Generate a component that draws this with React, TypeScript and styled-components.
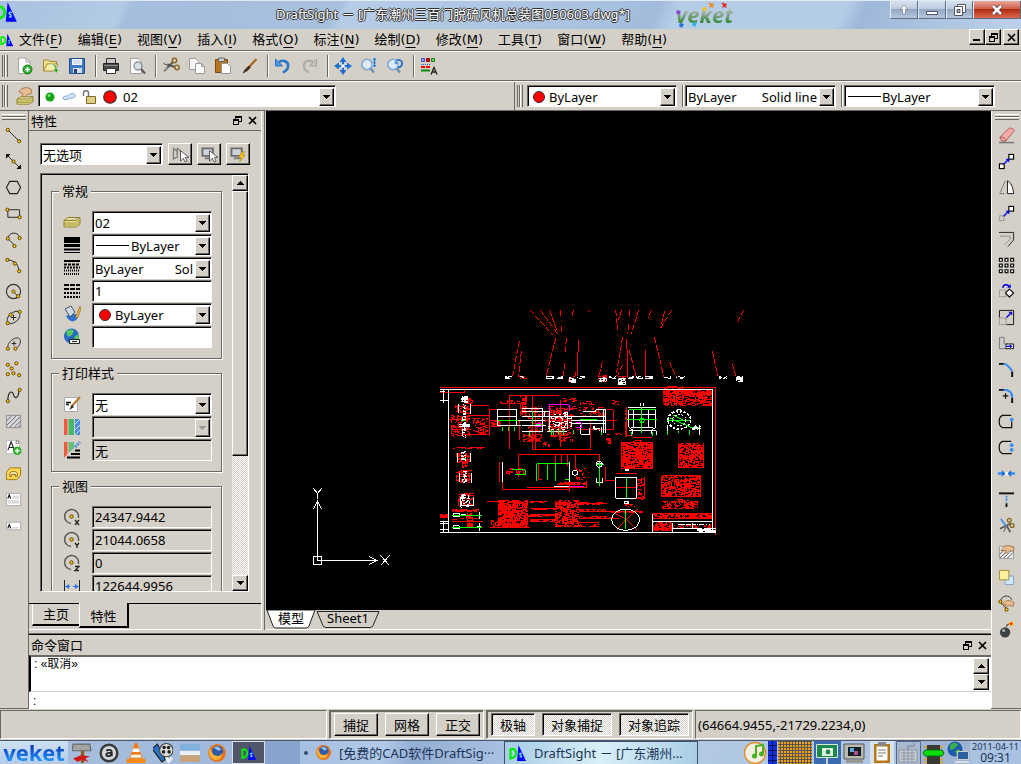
import React from "react";
import styled, { createGlobalStyle, css } from "styled-components";

const face = "#d4d0c8";
const shade = "#6a6862";
const uiFont = '"Noto Sans", "Noto Sans CJK SC", sans-serif';
const dither = `repeating-conic-gradient(#fff 0 25%, ${face} 0 50%) 0 0 / 2px 2px`;

const GlobalStyle = createGlobalStyle`
  * { box-sizing: border-box; }
  body { margin: 0; background: ${face}; overflow: hidden; }
  button, input, select, textarea { font: inherit; color: inherit; margin: 0; border-radius: 0; outline: none; }
`;

const raised = css`
  background: ${face};
  border: 1px solid;
  border-color: #fff #000 #000 #fff;
  box-shadow: inset -1px -1px 0 ${shade};
`;
const sunken = css`
  border: 1px solid;
  border-color: ${shade} #fff #fff ${shade};
  box-shadow: inset 1px 1px 0 #000;
`;

const Page = styled.div`
  display: flex;
  flex-direction: column;
  height: 100vh;
  min-height: 600px;
  font: 13px/18px ${uiFont};
  color: #000;
  background: ${face};
`;

/* ---------- title bar ---------- */
const TitleBar = styled.header`
  display: flex;
  align-items: flex-start;
  height: 29px;
  flex: none;
  border-top: 1px solid #dfeaf5;
  background: linear-gradient(115deg, #a9c1df 0%, #b4cbe6 12%, #a6bedd 13%, #a8c0de 33%, #b6cce7 34%, #a9c2e0 58%, #a3bbdb 64%, #b6cde8 66%, #b5cce7 82%, #9fb8d9 84%, #bcd1ea 100%);
`;
const TitleLogo = styled.span`
  display: flex;
  width: 276px;
  svg { margin-left: -4px; }
`;
const Title = styled.h1`
  margin: 0;
  padding-top: 3px;
  flex: 1;
  white-space: nowrap;
  font: 13px/20px ${uiFont};
  color: #fff;
  text-shadow: 1px 0 0 #333, -1px 0 0 #333, 0 1px 0 #333, 0 -1px 0 #333;
`;
const Brand = styled.span`
  position: relative;
  width: 60px;
  margin-right: 154px;
  font: italic bold 22px/26px "Open Sans", sans-serif;
  svg { position: absolute; left: 0; top: 0; }
`;
const BrandText = styled.span`
  background: linear-gradient(#cfd9cf 20%, #8fa58f 50%, #2f8a2c 80%);
  background-clip: text;
  color: transparent;
`;
const WindowButtons = styled.div`
  display: flex;
  height: 18px;
`;
const WindowButton = styled.button<{ $w: number; $close?: boolean }>`
  display: grid;
  place-items: center;
  width: ${(p) => p.$w}px;
  height: 18px;
  padding: 0;
  border: 1px solid #5b6b83;
  border-top: 0;
  border-left-color: #e4edf7;
  background: ${(p) =>
    p.$close
      ? "linear-gradient(#e9a99a, #d0604a 45%, #b32c12 50%, #d9694f)"
      : "linear-gradient(#d7e2ef, #bccbde 45%, #93a7c2 50%, #b6c8de)"};
`;

/* ---------- menu ---------- */
const MenuBar = styled.nav`
  display: flex;
  align-items: center;
  height: 22px;
  flex: none;
  padding-right: 2px;
  border-bottom: 1px solid ${shade};
  font-family: "DejaVu Sans", "Noto Sans CJK SC", sans-serif;
`;
const MenuItems = styled.div`
  display: flex;
  flex: 1;
  gap: 15px;
  padding-left: 5px;
`;
const MenuItem = styled.button`
  padding: 0;
  border: 0;
  background: none;
  white-space: nowrap;
  u { text-underline-offset: 3px; }
`;
const MdiButton = styled.button<{ $gap?: boolean }>`
  ${raised}
  display: grid;
  place-items: center;
  align-self: flex-start;
  width: 16px;
  height: 16px;
  padding: 0;
  margin-left: ${(p) => (p.$gap ? 2 : 0)}px;
`;

/* ---------- toolbars ---------- */
const ToolRow = styled.div`
  display: flex;
  align-items: center;
  height: 30px;
  flex: none;
  border-top: 1px solid #fff;
  border-bottom: 1px solid ${shade};
`;
const ToolSection = styled.div<{ $grow?: boolean }>`
  display: flex;
  align-items: center;
  height: 100%;
  flex: ${(p) => (p.$grow ? "1" : "none")};
  border-right: ${(p) => (p.$grow ? `1px solid ${shade}` : "0")};
  padding-right: ${(p) => (p.$grow ? 0 : 26)}px;
`;
const Grip = styled.span`
  width: 6px;
  height: 22px;
  margin: 0 4px 0 2px;
  border: solid;
  border-width: 0 1px;
  border-color: #fff ${shade};
  background: linear-gradient(90deg, ${face} 1px, ${shade} 1px 2px, #fff 2px 3px, ${face} 3px);
`;
const GripFlat = styled.span`
  flex: none;
  width: 24px;
  height: 6px;
  margin: 3px 0 2px 2px;
  border: solid;
  border-width: 1px 0;
  border-color: #fff ${shade} ${shade};
  background: linear-gradient(${face} 1px, ${shade} 1px 2px, #fff 2px 3px, ${face} 3px);
`;
const ToolButton = styled.button`
  display: grid;
  place-items: center;
  flex: none;
  width: 26px;
  height: 26px;
  padding: 0;
  border: 0;
  background: none;
`;
const Separator = styled.span`
  width: 2px;
  height: 22px;
  margin: 0 1px 0 5px;
  background: linear-gradient(90deg, ${shade} 1px, #fff 1px);
`;
const Combo = styled.label<{ $w?: number; $off?: boolean }>`
  ${sunken}
  display: flex;
  align-items: center;
  flex: ${(p) => (p.$w ? "none" : "1")};
  width: ${(p) => (p.$w ? `${p.$w}px` : "auto")};
  min-width: 0;
  height: 22px;
  padding: 2px 1px 1px 2px;
  background: ${(p) => (p.$off ? face : "#fff")};
  select {
    flex: 1;
    min-width: 0;
    height: 18px;
    padding: 0;
    border: 0;
    appearance: none;
    background: none;
    line-height: 18px;
  }
  > svg { flex: none; }
`;
const ComboNote = styled.span`
  flex: none;
  white-space: nowrap;
  margin-right: 2px;
`;
const Drop = styled.span`
  ${raised}
  display: grid;
  place-items: center;
  flex: none;
  width: 15px;
  height: 18px;
`;
const Field = styled.input<{ $off?: boolean }>`
  ${sunken}
  flex: 1;
  min-width: 0;
  height: 22px;
  padding: 0 2px;
  background: ${(p) => (p.$off ? face : "#fff")};
`;

/* ---------- work area ---------- */
const Work = styled.main`
  display: flex;
  flex: 1;
  min-height: 0;
`;
const SideBar = styled.div<{ $left?: boolean }>`
  display: flex;
  flex-direction: column;
  flex: none;
  width: ${(p) => (p.$left ? 29 : 30)}px;
  padding-left: ${(p) => (p.$left ? 0 : 2)}px;
  overflow: hidden;
  border: 0 solid ${shade};
  border-right-width: ${(p) => (p.$left ? 1 : 0)}px;
  border-bottom-width: 1px;
  box-shadow: ${(p) => (p.$left ? "none" : "inset 1px 0 0 #fff")};
`;
const Middle = styled.div`
  display: flex;
  flex-direction: column;
  flex: 1;
  min-width: 0;
`;
const Upper = styled.div`
  display: flex;
  flex: 1;
  min-height: 0;
`;
const Properties = styled.section`
  display: flex;
  flex-direction: column;
  flex: none;
  width: 233px;
  border-right: 1px solid #fff;
  border-bottom: 1px solid #fff;
`;
const PanelTitle = styled.div`
  display: flex;
  align-items: center;
  flex: none;
  height: 20px;
  padding: 0 1px 0 2px;
  h2 { flex: 1; margin: 0; font: inherit; }
`;
const PropTitle = styled(PanelTitle)`
  border-bottom: 1px solid ${shade};
`;
const PanelButton = styled.button`
  display: grid;
  place-items: center;
  width: 15px;
  height: 15px;
  padding: 0;
  border: 0;
  background: none;
`;
const PickRow = styled.div`
  display: flex;
  gap: 5px;
  padding: 12px 11px 8px 11px;
`;
const PickButton = styled.button`
  ${raised}
  display: grid;
  place-items: center;
  width: 24px;
  height: 22px;
  padding: 0;
`;
const PropFrame = styled.div`
  ${sunken}
  display: flex;
  flex: 1;
  min-height: 0;
  margin: 0 12px 11px 11px;
  padding: 1px 0 0 2px;
`;
const PropList = styled.div`
  flex: 1;
  min-width: 0;
  overflow: hidden;
  padding: 7px 10px 0 8px;
`;
const Group = styled.fieldset`
  min-width: 0;
  margin: 0 0 5px;
  padding: 11px 9px 9px 11px;
  border: 1px solid ${shade};
  box-shadow: inset 1px 1px 0 #fff, 1px 1px 0 #fff;
  legend {
    height: 18px;
    margin-left: -4px;
    padding: 0 3px;
    background: ${face};
  }
`;
const PropRow = styled.div`
  display: flex;
  align-items: center;
  margin-bottom: 1px;
  > svg { flex: none; margin-right: 11px; }
`;
const ScrollBar = styled.div`
  display: flex;
  flex-direction: column;
  flex: none;
  width: 16px;
  background: ${dither};
`;
const ScrollButton = styled.button`
  ${raised}
  display: grid;
  place-items: center;
  flex: none;
  width: 16px;
  height: 16px;
  padding: 0;
`;
const ScrollThumb = styled.div`
  ${raised}
  height: 69%;
`;
const ScrollSpace = styled.div`
  flex: 1;
`;
const PanelTabs = styled.div`
  display: flex;
  flex: none;
  height: 26px;
  padding-left: 3px;
  border-top: 1px solid #000;
`;
const PanelTab = styled.button<{ $on?: boolean }>`
  width: ${(p) => (p.$on ? 50 : 47)}px;
  height: ${(p) => (p.$on ? 25 : 22)}px;
  padding: ${(p) => (p.$on ? 2 : 0)}px 0 0;
  margin-top: ${(p) => (p.$on ? -1 : 0)}px;
  background: ${face};
  border: 1px solid;
  border-width: 0 ${(p) => (p.$on ? 2 : 0)}px 2px 1px;
  border-color: #fff #000 #000 #fff;
`;
const Viewport = styled.section`
  display: flex;
  flex-direction: column;
  flex: 1;
  min-width: 0;
  padding-left: 1px;
  margin-left: 2px;
  border-left: 1px solid ${shade};
`;
const Canvas = styled.div`
  flex: 1;
  min-height: 0;
  background: #000;
  svg { display: block; width: 100%; height: 100%; }
`;
const SheetTabs = styled.div`
  display: flex;
  flex: none;
  height: 20px;
  border-bottom: 1px solid #fff;
`;
const SheetTab = styled.button<{ $on?: boolean }>`
  display: grid;
  width: ${(p) => (p.$on ? 50 : 64)}px;
  height: 19px;
  padding: 0;
  border: 0;
  background: none;
  line-height: 17px;
  > * { grid-area: 1 / 1; }
`;
const Command = styled.section`
  flex: none;
  margin-top: 4px;
  border-top: 1px solid #000;
  box-shadow: 0 -1px 0 ${shade};
`;
const Log = styled.div`
  display: flex;
  height: 37px;
  padding: 1px 2px 1px 0;
  border: solid;
  border-width: 2px 0 1px 2px;
  border-color: ${shade} #fff ${face} #000;
  background: #fff;
  textarea {
    flex: 1;
    padding: 0 3px;
    border: 0;
    resize: none;
    overflow: hidden;
    background: none;
    font: 12px/12px "Liberation Sans", "Noto Sans CJK SC", sans-serif;
  }
`;
const LogScroll = styled.div`
  display: flex;
  flex-direction: column;
`;
const Prompt = styled.input`
  display: block;
  width: 100%;
  height: 17px;
  padding: 0 4px;
  border: 0;
  background: #fff;
  font: 12px/16px "Liberation Sans", "Noto Sans CJK SC", sans-serif;
`;

/* ---------- status bar ---------- */
const StatusBar = styled.footer`
  display: flex;
  flex: none;
  gap: 2px;
  height: 31px;
  padding-top: 1px;
`;
const StatusBox = styled.div<{ $w?: number }>`
  display: flex;
  align-items: center;
  gap: 7px;
  flex: ${(p) => (p.$w ? "none" : "1")};
  width: ${(p) => (p.$w ? `${p.$w}px` : "auto")};
  height: 29px;
  padding: 0 2px;
  border: 1px solid;
  border-color: ${shade} #fff #fff ${shade};
`;
const ModeBox = styled(StatusBox)`
  flex: none;
  padding: 0 3px 0 4px;
  box-shadow: inset 1px 1px 0 ${shade};
`;
const ModeButton = styled.button<{ $down?: boolean }>`
  ${(p) => (p.$down ? sunken : raised)}
  height: 23px;
  padding: 0 8px;
  background: ${(p) => (p.$down ? dither : face)};
`;

/* ---------- task bar ---------- */
const TaskBar = styled.footer`
  display: flex;
  align-items: stretch;
  flex: none;
  height: 24px;
  overflow: hidden;
  border-top: 1px solid #4a5870;
  background: linear-gradient(100deg, #a9c0de, #97b1d6 45%, #b5cbe6 60%, #a9c2e1);
  color: #1c3557;
`;
const StartButton = styled.button`
  width: 68px;
  padding: 0;
  border: 0;
  background: linear-gradient(#cfe0f3, #b3cbe8);
  font: bold 22px/23px "Open Sans", sans-serif;
  span {
    display: block;
    background: linear-gradient(#0a3fc0 25%, #1a8cf5 80%);
    background-clip: text;
    color: transparent;
  }
`;
const Launch = styled.button`
  display: grid;
  place-items: center;
  width: 27px;
  padding: 0;
  border: 0;
  background: none;
`;
const PagerOn = styled.span`
  display: grid;
  place-items: center;
  width: 33px;
  margin-left: 2px;
  border: 1px solid #d8dde6;
  background: #4f5768;
`;
const PagerOff = styled.span`
  width: 35px;
  background: #88a4cc;
`;
const Task = styled.button<{ $on?: boolean }>`
  display: flex;
  align-items: center;
  gap: 7px;
  width: ${(p) => (p.$on ? 194 : 204)}px;
  padding: 0 4px;
  overflow: hidden;
  white-space: nowrap;
  border: 0 solid #40506a;
  border-width: ${(p) => (p.$on ? "1px 1px 0 1px" : "0")};
  background: ${(p) =>
    p.$on ? "linear-gradient(100deg, #a5cbe4, #d9eff8 50%, #a9cde4)" : "linear-gradient(100deg, #a6c0e2, #b2c9e7 40%, #94aed4 55%, #a9c2e2)"};
  color: inherit;
`;
const Spacer = styled.span`
  flex: 1;
`;
const Tray = styled.div`
  display: flex;
  align-items: stretch;
  svg { display: block; flex: none; }
`;
const Clock = styled.time`
  width: 51px;
  text-align: center;
  white-space: nowrap;
  font: 9px/11px ${uiFont};
  color: #1c3557;
  span { display: block; font-size: 12px; line-height: 12px; }
`;

/* ---------- small drawings ---------- */
const Svg = ({ s = 18, w, h, box, children }: { s?: number; w?: number; h?: number; box?: string; children: React.ReactNode }) => (
  <svg width={w || s} height={h || s} viewBox={box || "0 0 18 18"} fill="none" aria-hidden="true">
    {children}
  </svg>
);
const Arrow = ({ up, off }: { up?: boolean; off?: boolean }) => (
  <svg width="7" height="4" viewBox="0 0 7 4" shapeRendering="crispEdges" aria-hidden="true">
    <path d={up ? "M3 0h1v1h1v1h1v1h1v1H0V3h1V2h1V1h1z" : "M0 0h7v1H6v1H5v1H4v1H3V3H2V2H1V1H0z"} fill={off ? "#999" : "#000"} />
  </svg>
);
const Restore = () => (
  <svg width="9" height="9" viewBox="0 0 9 9" shapeRendering="crispEdges" aria-hidden="true">
    <path d="M2.500 3V.5h6v5H6M2 1.500h7M.5 3.500h5v5h-5zM0 4.500h6" stroke="#000" fill="none" />
  </svg>
);
const Cross = () => (
  <svg width="9" height="9" viewBox="0 0 9 9" aria-hidden="true">
    <path d="M1 1l7 7M8 1L1 8" stroke="#000" strokeWidth="1.700" />
  </svg>
);
const DsMark = ({ s = 18 }: { s?: number }) => (
  <Svg s={s}>
    <path d="M9.500 1L17 17H8z" fill="#00f" />
    <path d="M1.500 5.500v9c4-.5 6-3 5.500-6S4 4 1.500 5.500z" stroke="#0e0" strokeWidth="2.200" />
    <path d="M13 9.500c-2-1-3 .5-1.500 1.500s1.500 2.500-1 2" stroke="#7fe3ff" strokeWidth="1.200" />
  </Svg>
);
const RedDot = ({ s = 14 }: { s?: number }) => (
  <Svg s={s} box="0 0 14 14">
    <circle cx="7" cy="7" r="5.500" fill="red" stroke="#333" strokeWidth="1" />
  </Svg>
);
const Rule = () => (
  <svg width="33" height="3" shapeRendering="crispEdges" aria-hidden="true">
    <path d="M0 1.500h33" stroke="#000" />
  </svg>
);

const Dots = ({ at }: { at: number[][] }) => (
  <>
    {at.map(([x, y], i) => (
      <circle key={i} cx={x} cy={y} r="1.700" fill="#ffc800" stroke="#4a3500" strokeWidth=".9" />
    ))}
  </>
);
const Squares = ({ at }: { at: number[][] }) => (
  <>
    {at.map(([x, y], i) => (
      <rect key={i} x={x} y={y} width="5" height="5" fill="#fff" stroke="#000" strokeWidth="1.200" />
    ))}
  </>
);

const fileIcons: Record<string, React.ReactNode> = {
  new: (
    <>
      <path d="M2.500 1h7.500l4 4v11.500H2.500z" fill="#fcfcfc" stroke="#a5a5a5" />
      <path d="M10 1v4h4" stroke="#a5a5a5" />
      <circle cx="11.500" cy="12.500" r="4.500" fill="#2bb02b" stroke="#167a16" />
      <path d="M11.500 10v5M9 12.500h5" stroke="#fff" strokeWidth="1.600" />
    </>
  ),
  open: (
    <>
      <path d="M1.500 14V3h5l1 1.500h7V7" fill="#efe08e" stroke="#a28b32" />
      <path d="M1.500 14L5 7h11l-3 7z" fill="#f6eca6" stroke="#a28b32" />
      <path d="M7 8c4-1 6 1 6 4h-2l3.500 4.500L17 12h-2c0-4-3-6-8-4z" fill="#3aa53a" stroke="#e8f4dc" strokeWidth=".6" />
    </>
  ),
  save: (
    <>
      <path d="M1.500 1.500h15v15h-15z" fill="#3f7bc4" stroke="#1e4e8c" />
      <path d="M4 2h10v6H4z" fill="#f2f6fb" />
      <path d="M5 4h8M5 6h8" stroke="#b9c7d8" />
      <path d="M5 11h9v5H5z" fill="#d4dde8" />
      <path d="M6 12h3v4H6z" fill="#27456e" />
    </>
  ),
  print: (
    <>
      <path d="M4.500 1.500h9V7h-9z" fill="#c9c9c9" stroke="#333" />
      <path d="M1.500 6.500h15v7h-15z" fill="#4a4a4a" stroke="#222" />
      <path d="M2 8.500h14" stroke="#8b8b8b" />
      <path d="M4.500 11.500h9v5h-9z" fill="#fff" stroke="#333" />
    </>
  ),
  preview: (
    <>
      <path d="M2.500 1.500h8l3 3v12h-11z" fill="#fafafa" stroke="#a0a0a0" />
      <circle cx="10" cy="9" r="4" fill="#d3dbe3" fillOpacity=".9" stroke="#8c959e" strokeWidth="1.400" />
      <path d="M13 12l4 4.500" stroke="#555" strokeWidth="2" />
    </>
  ),
  cut: (
    <>
      <path d="M1.500 6l11 4M2 14l9-9" stroke="#555" strokeWidth="2" />
      <circle cx="12.500" cy="3.500" r="2.200" stroke="#8a6a1e" strokeWidth="1.500" />
      <circle cx="15" cy="10.500" r="2.200" stroke="#8a6a1e" strokeWidth="1.500" />
      <path d="M1.500 5.500l4 1.500M2 13.500l3-3" stroke="#f4f4f4" />
    </>
  ),
  copy: (
    <>
      <path d="M1.500 1.500h6l3 3v8h-9z" fill="#fbfbfb" stroke="#9a9a9a" />
      <path d="M7.500 6.500h6l3 3v7h-9z" fill="#fbfbfb" stroke="#9a9a9a" />
      <path d="M13.500 6.500v3h3" stroke="#9a9a9a" />
    </>
  ),
  paste: (
    <>
      <path d="M1.500 2.500h12v13h-12z" fill="#b8731c" stroke="#7c4b0e" />
      <path d="M4.500 1h6v3.500h-6z" fill="#ccc" stroke="#666" />
      <path d="M7.500 6.500h6l3 3v7h-9z" fill="#fbfbfb" stroke="#999" />
    </>
  ),
  brush: (
    <>
      <path d="M16.500 2L8 11" stroke="#a2601a" strokeWidth="2" />
      <path d="M9 9l1.500 1.500-3 3-4.500 2.500L5.500 12z" fill="#4b3322" stroke="#1f140c" strokeWidth=".6" />
    </>
  ),
  undo: (
    <>
      <path d="M5 5c5-3 10 0 9 5-.4 2.500-2 4-5 5.500" stroke="#2b74c8" strokeWidth="2.600" />
      <path d="M1.500 2v7h7z" fill="#4b97e6" stroke="#2b6fc0" />
    </>
  ),
  redo: (
    <>
      <path d="M13 5C8 2 3 5 4 10c.4 2.500 2 4 5 5.500" stroke="#b1aea7" strokeWidth="2.400" />
      <path d="M16.500 2v7h-7z" fill="#c6c3bc" stroke="#a5a29b" />
    </>
  ),
  pan: (
    <>
      <path d="M9 2v14M2 9h14" stroke="#1f6fd0" strokeWidth="2" />
      <path d="M9 0l3.500 5h-7zM9 18l3.500-5h-7zM0 9l5-3.500v7zM18 9l-5-3.500v7z" fill="#1f6fd0" />
      <circle cx="9" cy="9" r="1.800" fill="#fff" />
    </>
  ),
  zoom: (
    <>
      <circle cx="7" cy="7.500" r="5.200" fill="#dcebf8" stroke="#83a7cf" strokeWidth="1.600" />
      <path d="M10.500 11.500l3.500 4" stroke="#6e8fb3" strokeWidth="2.400" />
      <path d="M14.500 3v5" stroke="#1f6fd0" strokeWidth="1.600" />
      <path d="M14.500 0L17 3.500h-5zM14.500 11L17 7.500h-5z" fill="#1f6fd0" stroke="#fff" strokeWidth=".4" />
    </>
  ),
  zoomBack: (
    <>
      <circle cx="7" cy="7.500" r="5.200" fill="#dcebf8" stroke="#83a7cf" strokeWidth="1.600" />
      <path d="M10.500 11.500l3.500 4" stroke="#6e8fb3" strokeWidth="2.400" />
      <path d="M10 3.500c4-2 7 1 6 4s-3 3-4 3" stroke="#2b74c8" strokeWidth="1.800" />
      <path d="M8.500 2v5.500h5z" fill="#4b97e6" stroke="#fff" strokeWidth=".4" />
    </>
  ),
  style: (
    <>
      <path d="M1.500 1.500h3v3h-3z" fill="#8fa4ff" stroke="#3c50c8" />
      <path d="M6.500 1.500h3v3h-3z" fill="red" stroke="#800" />
      <path d="M11.500 1.500h3v3h-3z" fill="#58e058" stroke="#117a11" />
      <path d="M1 7.500h9" stroke="#3c50c8" strokeDasharray="1 1" />
      <path d="M1 10h9" stroke="red" strokeWidth="2" strokeDasharray="4 1" />
      <path d="M1 13.500h9" stroke="#0a8a0a" strokeWidth="2" />
      <path d="M11 17.500l3-7 3 7M12 15h4" stroke="#222" strokeWidth="1.300" />
    </>
  ),
};

const drawIcons: [string, React.ReactNode][] = [
  ["line", <><path d="M4 4l11 11" stroke="#222" /><Dots at={[[3, 3], [15, 15]]} /></>],
  ["infinite line", <><path d="M2 2l14 14" stroke="#222" /><path d="M1 1h5L1 6zM17 17h-5l5-5z" fill="#111" /><Dots at={[[9, 9]]} /></>],
  ["polygon", <path d="M5 2.500h8L16.500 9 13 15.500H5L1.500 9z" stroke="#222" strokeWidth="1.200" />],
  ["rectangle", <><path d="M3 5h12.500v8H3z" stroke="#222" /><Dots at={[[2.500, 5], [15.500, 13]]} /></>],
  ["arc", <><path d="M3 8c1-7 10-8 13-1M3 8l7 7" stroke="#222" /><Dots at={[[3, 8], [15.500, 7.500], [10, 16]]} /></>],
  ["curve", <><path d="M3 3c8 1 11 5 12 12" stroke="#222" /><Dots at={[[2.500, 3], [10.500, 7], [15, 15]]} /></>],
  ["circle", <><circle cx="9" cy="9" r="7.500" stroke="#333" strokeWidth="1.200" /><path d="M9 9l4.500 5" stroke="#333" /><Dots at={[[9, 9], [14, 14]]} /></>],
  ["ellipse", <><ellipse cx="9" cy="9" rx="8" ry="5" transform="rotate(-42 9 9)" stroke="#333" /><path d="M9 6v6M6 9h6" stroke="#222" /><Dots at={[[6, 6], [15.500, 3], [3, 15]]} /></>],
  ["elliptic arc", <><path d="M3 14C2 9 8 3 13 3s4 8-1 11" stroke="#333" /><path d="M9.500 6.500v5M7 9h5" stroke="#222" /><Dots at={[[3, 14.500], [11, 14.500]]} /></>],
  ["points", <Dots at={[[3, 4], [12, 2.500], [7, 8], [3, 14], [9, 13], [15, 15]]} />],
  ["spline", <><path d="M3 15C3 3 8 4 9 8s5 6 6-5" stroke="#222" strokeWidth="1.200" /><Dots at={[[3, 15], [15.500, 3]]} /></>],
  ["hatch", <><path d="M1.500 2.500h15v13h-15z" fill="#d9d9dc" stroke="#8b8b90" /><path d="M2 8l5-5M2 13L12 3M5 15L16 4M10 15l6-6M14 15l2-2" stroke="#5c5c64" /></>],
  ["note", <><path d="M1.500 1.500h14v14h-14z" fill="#fff" stroke="#bbb" /><path d="M3 12L6.500 3 10 12M4 9h5" stroke="#222" strokeWidth="1.200" /><circle cx="13" cy="3.500" r="1.500" stroke="#444" strokeWidth=".8" /><circle cx="13" cy="12.500" r="4.500" fill="#2bb02b" /><path d="M13 10v5M10.500 12.500h5" stroke="#fff" strokeWidth="1.500" /></>],
  ["region", <><path d="M5 3h11.500v8l-4 4.500H1.500V8z" fill="#ffd653" stroke="#9c7a12" /><path d="M5 12V9c1-3 7-3 8 0v3h-2v-2H7v2z" fill="#f5e6ae" stroke="#8a6a1e" /></>],
  ["text", <><path d="M1.500 2.500h15v13h-15z" fill="#fff" stroke="#aaa" /><path d="M3 8l1.500-4L6 8" stroke="#111" strokeWidth="1.200" /><path d="M8 5.500h7M8 7.500h7M3 10.500h12M3 12.500h12" stroke="#bbb" /></>],
  ["simple text", <><path d="M1.500 5.500h15v8h-15z" fill="#fff" stroke="#aaa" /><path d="M3 12l1.500-4L6 12" stroke="#111" strokeWidth="1.200" /><path d="M8 11.500h6" stroke="#bbb" /></>],
];

const blueArrow = <path d="M6 12l5-5" stroke="#0a0ae0" strokeWidth="1.500" />;
const hand = <path d="M3 8c2-4 6-6 10-5l4 2-1 4-4-1-3 3-2-1 2-2z" fill="#e7bd91" stroke="#9a6c3e" strokeWidth=".8" />;
const editIcons: [string, React.ReactNode][] = [
  ["erase", <><path d="M1 16.500h16" stroke="#777" strokeWidth="1.600" /><path d="M2 11l9-9c2-2 7 0 6 2.500L8 15H4z" fill="#f3aaa5" stroke="#a95a56" /><path d="M2 11c3-1 6 1 6 4" stroke="#a95a56" /></>],
  ["move", <><Squares at={[[1.500, 11.500], [11.500, 1.500]]} />{blueArrow}<path d="M12 6v4l-4-4z" fill="#00d" /></>],
  ["mirror", <><path d="M7.500 2L2 15.500h5.500" stroke="#222" strokeDasharray="1 1" /><path d="M10 2v13.500h6.500C16 8 13 3 10 2z" fill="#fff" stroke="#111" /></>],
  ["copy", <><Squares at={[[11.500, 1.500]]} /><path d="M1.500 11.500h5v5h-5z" stroke="#777" strokeDasharray="1.500 1" />{blueArrow}<path d="M12 6v4l-4-4z" fill="#00d" /></>],
  ["offset", <><path d="M1 1.500h15.500v8l-6 7" stroke="#222" /><path d="M2 5.500h11v3l-7 7" stroke="#777" strokeDasharray="2 1" /></>],
  ["pattern", <path d="M1.500 1.500h3v3h-3zM7.500 1.500h3v3h-3zM13.500 1.500h3v3h-3zM1.500 7.500h3v3h-3zM7.500 7.500h3v3h-3zM13.500 7.500h3v3h-3zM1.500 13.500h3v3h-3zM7.500 13.500h3v3h-3zM13.500 13.500h3v3h-3z" fill="#fff" stroke="#111" strokeWidth="1.300" />],
  ["rotate", <><path d="M1.500 7.500h7v7h-7z" stroke="#777" strokeDasharray="1.500 1" /><path d="M12 6.500l4.500 4-4.500 4.500-4-4.500z" fill="#fff" stroke="#111" strokeWidth="1.300" /><path d="M5 5c1-4 5-4 7-1" stroke="#00d" strokeWidth="1.500" /><path d="M9.500 5h4V1z" fill="#00d" /></>],
  ["scale", <><path d="M1.500 9V1.500h15v15H9" stroke="#111" /><path d="M1.500 9.500h7v7h-7z" stroke="#777" strokeDasharray="1.500 1" /><path d="M9 9l5-5" stroke="#00d" strokeWidth="1.400" /><path d="M15 3v4l-4-4z" fill="#00d" /></>],
  ["stretch", <><path d="M1.500 2.500h5v7h4v5h-9z" fill="#ccc" stroke="#777" /><path d="M8.500 9.500h8v5h-8z" fill="#fff" stroke="#111" /><path d="M9 12h4" stroke="#00d" strokeWidth="1.400" /><path d="M12.500 9.800l3 2.200-3 2.200z" fill="#00d" /></>],
  ["chamfer", <><path d="M1 3h6M15 11v6" stroke="#111" strokeWidth="2" /><path d="M6 3c3 0 7 4 9 8" stroke="#3a8df0" strokeWidth="2.200" /></>],
  ["fillet", <><path d="M1 3h6M15 11v6" stroke="#111" strokeWidth="2" /><path d="M5 9.500h6M8 6.500v6" stroke="#111" strokeWidth="1.300" /><path d="M6 3c6 0 9 3 9 8" stroke="#3a8df0" strokeWidth="2.200" /></>],
  ["break", <><path d="M14 2.500H5C0 4 0 14 5 15.500h9.500V9" stroke="#111" strokeWidth="1.300" /><circle cx="14.500" cy="7" r="2" fill="#3a8df0" /></>],
  ["split", <><path d="M14 2.500H5C0 4 0 14 5 15.500h9.500" stroke="#111" strokeWidth="1.300" /><circle cx="14.500" cy="6.500" r="2" fill="#3a8df0" /><circle cx="14.500" cy="11.500" r="2" fill="#3a8df0" /></>],
  ["weld", <><path d="M0 9h7M11 9h7" stroke="#3a8df0" strokeWidth="2.400" /><path d="M7 9h4" stroke="#fff" strokeWidth="3" /><path d="M4 5.500L8 9l-4 3.500zM14 5.500L10 9l4 3.500z" fill="#1f6fd0" /></>],
  ["trim", <><path d="M1 2.500h16" stroke="#111" strokeWidth="2" /><path d="M9 5v7" stroke="#3a8df0" strokeWidth="2" strokeDasharray="2 1" /><path d="M9 13v4" stroke="#111" strokeWidth="2" /></>],
  ["scissors", <><path d="M9 9l4 7M2 12.500l12-6" stroke="#555" strokeWidth="1.800" /><path d="M3 2l6 8" stroke="#3a8df0" strokeWidth="1.800" /><path d="M9 9l-3 7" stroke="#777" strokeWidth="1.400" /><circle cx="12" cy="3.500" r="2" stroke="#8a6a1e" strokeWidth="1.400" /><circle cx="15" cy="9" r="2" stroke="#8a6a1e" strokeWidth="1.400" /></>],
  ["edit hatch", <><path d="M1.500 3.500h15v13h-15z" fill="#eee" stroke="#999" /><path d="M2 12l5-5M2 16l9-9M6 16l9-9M10 16l6-6" stroke="#555" />{hand}</>],
  ["order", <><path d="M7.500 7.500h9v9h-9z" fill="#cfe8fb" stroke="#7fa3bd" /><path d="M1.500 1.500h10v10h-10z" fill="#fbf0a0" stroke="#9a8c3c" /></>],
  ["edit polyline", <><path d="M2.500 7c1-7 10-8 12-2M3 8l6 7" stroke="#333" /><path d="M4 10c2-3 6-5 9-4l4 2-1 4-4-1-3 2-2-1 2-2z" fill="#e7bd91" stroke="#9a6c3e" strokeWidth=".8" /><Dots at={[[2.500, 7], [9, 15.500]]} /></>],
  ["explode", <><circle cx="7.500" cy="12" r="5.500" fill="#3f4144" /><circle cx="6" cy="10" r="1.600" fill="#aeb2b6" /><path d="M9 6c0-2 2-3 4-3" stroke="#555" strokeWidth="1.500" /><circle cx="14" cy="3" r="2.600" fill="#ffb300" /><circle cx="14" cy="3" r="1.200" fill="#e00" /></>],
];

const layerStack = <path d="M1 7.500L5 4.500h12l-4 3zM1 7.500V14h12l4-3V4.500" fill="#eee58d" stroke="#8c8230" />;
const centreMark = (path: string) => (
  <>
    <path d="M15.500 10A7 7 0 1 0 8 15.500" stroke="#555" strokeWidth="1.400" />
    <Dots at={[[8.500, 8.500]]} />
    <path d={path} stroke="#222" strokeWidth="1.300" />
  </>
);
const propIcons: Record<string, React.ReactNode> = {
  layer: <>{layerStack}<path d="M1 10h12l4-3M1 12h12l4-3" stroke="#8c8230" strokeWidth=".8" /></>,
  weight: <><path d="M1 4h16" stroke="#000" strokeWidth="6" /><path d="M1 9.500h16" stroke="#000" strokeWidth="3" /><path d="M1 13.500h16" stroke="#000" strokeWidth="2" /><path d="M1 16.500h16" stroke="#000" /></>,
  pattern: <><path d="M1 2h16" stroke="#000" strokeWidth="2" /><path d="M1 5.500h16" stroke="#000" strokeDasharray="3 1" strokeWidth="2" /><path d="M1 8.500h16" stroke="#000" strokeDasharray="2 1" strokeWidth="2" /><path d="M1 11.500h16M1 15h16" stroke="#000" strokeDasharray="1 1" strokeWidth="2" /></>,
  scale: <><path d="M1 3h16M1 7h16" stroke="#000" strokeDasharray="5 1" strokeWidth="2" /><path d="M1 11h16M1 15h16" stroke="#000" strokeDasharray="2 1" strokeWidth="2" /></>,
  colour: <><path d="M3 11c3 7 10 7 12 1-1-3-4-4-7-3z" fill="#2f6fd0" /><path d="M2 4l6-3 4 6-5 5z" fill="#cdd6e2" stroke="#44546c" /><path d="M17 1l-5 12 3-1 3-8z" fill="#e8b348" stroke="#916319" strokeWidth=".6" /></>,
  link: <><circle cx="8.500" cy="8" r="7.500" fill="#2468c8" /><path d="M3 4c3-3 6-3 8-1l-2 4-4 2zM11 9l4-3 1 4-3 4z" fill="#56c860" /><path d="M6.500 11.500h10v4h-10z" fill="#eee" stroke="#222" /><path d="M9 13.500h5" stroke="#222" /></>,
  plot: <><path d="M1.500 2.500h13v14h-13z" fill="#fff" stroke="#aaa" /><path d="M3 7.500h5M3 9.500h3" stroke="#111" strokeWidth="1.500" /><path d="M17 2L8 12" stroke="#b8772a" strokeWidth="2" /><path d="M9 10l-3 5 5-3z" fill="#222" /></>,
  table: <><path d="M1 1h3.500v16H1z" fill="#f25a3c" /><path d="M5.500 1h5.500v16H5.500z" fill="#46b868" /><path d="M12 1h5v16h-5z" fill="#4c8fe0" /><path d="M12 6l5-5M12 12l5-5M12 17l5-5" stroke="#cfe2fa" /></>,
  attach: <><path d="M1 1h3.500v12L1 17z" fill="#f25a3c" /><path d="M5.500 1h5.500v6l-5.500 5z" fill="#62c07c" /><path d="M12 6l5-5" stroke="#4c8fe0" strokeWidth="3" strokeDasharray="2 1" /><path d="M4 16.500h13M8 13h9M12 9.500h5" stroke="#000" strokeWidth="2" /></>,
  x: centreMark("M12 12l4 5M16 12l-4 5"),
  y: centreMark("M12 12l2 2.500L16 12M14 14.500V17"),
  z: centreMark("M12 12.500h4L12 16.500h4"),
  width: <><path d="M1.500 3v14M16.500 3v14" stroke="#222" /><path d="M3 9.500h12" stroke="#2b74e8" strokeDasharray="4 3" /><path d="M2 9.500L6 7v5zM16 9.500L12 7v5z" fill="#2b74e8" /></>,
};

/* ---------- the plotted drawing ---------- */
type Box = [x: number, y: number, w: number, h: number, density: number];

// Cells of short strokes: what lettering and hatching turn into when the plan is zoomed far out.
const speckle = (boxes: Box[], seed: number) => {
  let s = seed;
  const rnd = () => {
    s = (s * 1103515245 + 12345) % 2147483648;
    return s / 2147483648;
  };
  const out: string[] = [];
  boxes.forEach(([x, y, w, h, density]) => {
    for (let py = y; py < y + h; py += 3) {
      let px = x;
      while (px < x + w) {
        const run = 3 * (1 + Math.floor(rnd() * 2.6));
        if (rnd() < density) out.push(`M${px} ${py + 1}h${Math.min(run, x + w - px)}`);
        if (rnd() < density * 0.25 && py + 9 < y + h) out.push(`M${px + 1} ${py}v9`);
        px += run;
      }
    }
  });
  return out.join("");
};

const redBlocks: Box[] = [
  [700, 271, 145, 18, 0.8], [700, 289, 145, 28, 0.55], [703, 255, 60, 15, 0.2],
  [574, 427, 94, 78, 0.75], [606, 420, 30, 9, 0.6],
  [745, 431, 76, 74, 0.6], [695, 528, 118, 63, 0.55], [697, 604, 106, 24, 0.65], [742, 598, 34, 6, 0.6],
  [205, 600, 90, 84, 0.75], [184, 660, 110, 24, 0.4], [376, 600, 72, 80, 0.62],
  [300, 604, 50, 5, 0.7], [300, 625, 75, 6, 0.7], [295, 645, 90, 6, 0.7], [300, 660, 75, 6, 0.6],
  [448, 608, 70, 8, 0.6], [448, 628, 84, 8, 0.6], [448, 650, 100, 8, 0.6], [448, 672, 60, 8, 0.5], [540, 634, 110, 4, 0.5],
  [668, 642, 178, 12, 0.6], [668, 668, 60, 26, 0.7], [730, 672, 112, 12, 0.4],
  [210, 300, 60, 10, 0.35], [400, 296, 40, 12, 0.5], [450, 305, 50, 12, 0.4], [546, 302, 20, 14, 0.5],
  [270, 290, 22, 60, 0.5], [296, 320, 130, 90, 0.16], [280, 404, 56, 24, 0.45], [390, 404, 40, 24, 0.4], [355, 325, 60, 85, 0.25], [426, 320, 100, 30, 0.2],
  [64, 345, 56, 66, 0.36], [130, 355, 45, 50, 0.35], [76, 315, 48, 26, 0.45], [108, 295, 20, 18, 0.7],
  [70, 442, 94, 6, 0.4], [80, 460, 44, 28, 0.45], [78, 512, 48, 38, 0.45], [86, 580, 46, 40, 0.4], [96, 485, 18, 20, 0.5], [30, 643, 24, 10, 0.8],
  [66, 628, 80, 8, 0.5], [66, 656, 80, 6, 0.4], [110, 640, 20, 44, 0.5], [184, 365, 30, 18, 0.7], [228, 506, 56, 20, 0.3], [440, 500, 36, 40, 0.12], [380, 546, 90, 8, 0.8],
  [585, 330, 6, 80, 0.7], [622, 532, 22, 68, 0.35], [530, 400, 60, 6, 0.4], [586, 614, 30, 8, 0.5], [340, 428, 20, 14, 0.6], [528, 414, 15, 16, 0.6],
  [265, 228, 26, 9, 0.4], [415, 228, 24, 21, 0.4], [505, 226, 26, 21, 0.6], [564, 228, 24, 12, 0.4],
];
const whiteBlocks: Box[] = [
  [224, 229, 22, 8, 0.7], [270, 230, 16, 6, 0.6], [348, 229, 23, 8, 0.7], [381, 229, 21, 8, 0.6], [417, 232, 20, 16, 0.6], [441, 229, 24, 8, 0.6],
  [507, 230, 22, 16, 0.5], [537, 229, 20, 8, 0.6], [564, 234, 24, 20, 0.65], [594, 229, 18, 8, 0.6], [617, 229, 23, 8, 0.7], [646, 229, 22, 8, 0.6],
  [702, 229, 21, 8, 0.7], [739, 229, 26, 8, 0.6], [866, 229, 24, 8, 0.7], [918, 228, 22, 18, 0.6],
  [92, 290, 22, 20, 0.6], [98, 312, 10, 100, 0.4], [86, 372, 34, 8, 0.7], [94, 455, 14, 30, 0.4], [98, 515, 12, 34, 0.3], [94, 582, 26, 40, 0.25],
  [584, 507, 14, 5, 0.8], [582, 603, 16, 8, 0.8], [800, 685, 58, 12, 0.8], [786, 376, 26, 14, 0.6], [355, 340, 70, 50, 0.2], [490, 380, 20, 14, 0.3],
  [740, 674, 100, 3, 0.6],
];
const redLines =
  "M30 262.500H857M857.500 262V705M30 278h73v-10" +
  "M238.500 446V288h150M308 288v162h173V360M178 405V328h34M120 318h56M110 403h70M110 348h70M64 388h60M55 360h65" +
  "M180 361h380M550 330v60H440M530 330h20M265 530V463h244v90M217 540v30h200M208 487v60M392 300v140M389 330v90M316 320v130M268 360v60" +
  "M377 465v75M395 463v25M412 463v35M436 463v45M326 490v50h10M352 490v50M290 563h180v-20M420 546v30" +
  "M695 528h118v63H695zM574 427h94v78h-94zM745 436h76v66h-76zM700 282h145M716 271v40M740 271v46M758 271v46" +
  "M590 320v86h18M608 413h58M557 522h62v-4M643 532v64h-24M557 562h64M590 562v36M526 500v42h32" +
  "M540 632L590 658 625 625M560 690l28-32 34 32M668 642h180M668 655h180M66 632h76M66 664h92M668 686h60M30 648h24" +
  "M300 605h40M300 625h80M300 645h90M300 660h80M448 612h84M448 636h160M448 656h120M448 668h60M180 684h120M170 605h50";
const dashes =
  "M300 30L368 104M331 30L382 101M359 30L380 90M391 30V47M430 30L427 45M474 36L480 30M394 78V96" +
  "M557 30L563 90M575 30L565 60M600 30L598 54M597 72L593 98M626 30L604 102M664 30L655 53M704 33L692 85M725 30L692 85M941 30L922 66" +
  "M268 123L248 228M274 152L266 228M377 114L349 228M409 114L406 158M404 190L400 228M436 215V228M517 186L507 228" +
  "M578 112L558 228M597 150L618 228M577 195L562 228M673 112L702 230M718 186L740 232M847 153L863 228M907 192L918 228";
const whiteLines =
  "M30 268.500H848V697M55.500 268V697M30 697.500H858M30 275h16M30 303h25M40 270v40M30 664h25M30 672h25M30 688h25M42 664v33" +
  "M202 328h58v48h-58zM202 350h58M202 376h72M277 325h60v70h-60M277 334h66v16M265 362h80M277 350h250M277 376h70M345 336h14v60M352 395h60M401 338h12v48M424 350h100M424 372h100M452 375v28h28v-20M458 334h40v-4h30v70M522 330v70M424 362h100M516 402v-20" +
  "M595 322h82M596 330v52l12 8v12M677 330v52l-12 8v12M596 345h80M596 360h80M612 330v52M635 322v76M656 330v52M604 382h64M597 392h82v14M632 310v8M640 310v8" +
  "M557 532h62v63h-62zM620 532v63M418 487v60M217 487v60M500 535v14h18v-14M508 485v15M372 559h46M500 492h18" +
  "M668 642v55M668 664h180M728 668v29M730 685h70M788 668v20M712 405v-30M808 405v-20" +
  "M86 312v26M122 312v30M82 460v26M122 460v26M88 520v26M124 518v30M92 590v30M130 590v28M92 618h38" +
  "M70 640h18v10H70zM92 645h16M150 636v20M140 646h14M70 677h18v10H70zM92 682h16M150 670v22M140 680h14";
const greenLines =
  "M596 330h82M635 322v76M590 360h90M606 395v12M668 395v12M714 392v12M746 392v8M778 390v14M712 362h70M720 355l60 25M730 345l30 15M780 384h26" +
  "M205 362h60M218 380v14M236 380v14M255 380v14M300 395v12M308 334v40M364 390v14M372 390v14M386 385v20M400 390v14M430 390v12M450 360h50M516 395v10" +
  "M320 492h96M320 492v50M352 495v45M378 492v50M404 540h14M590 532v63M586 628v60M508 485v74M497 493h24M246 510h40v14h-30" +
  "M94 362h14M98 475h10M66 646h90M66 682h90M318 375h20";

const Plan = () => (
  <svg aria-label="CAD drawing" role="img" shapeRendering="crispEdges" fill="none">
    <g transform="translate(164 189) scale(.33333)" strokeWidth="3">
      <path d={speckle(redBlocks, 17)} stroke="red" />
      <path d={redLines} stroke="red" />
      <path d={dashes} stroke="red" strokeDasharray="18 5" />
      <path d="M445 120L442 228M590 117L594 235M646 150V235" stroke="red" />
      <path d={whiteLines} stroke="#fff" />
      <path d={greenLines} stroke="#0f0" />
      <path d={speckle(whiteBlocks, 5)} stroke="#fff" />
      <ellipse cx="587" cy="659" rx="42" ry="32" stroke="#fff" />
      <ellipse cx="748" cy="360" rx="34" ry="27" stroke="#fff" strokeWidth="5" strokeDasharray="8 4" />
      <ellipse cx="748" cy="360" rx="20" ry="16" stroke="#fff" strokeDasharray="6 4" />
      <path d="M742 340v-10h10v10" stroke="#fff" />
      <circle cx="636" cy="361" r="7" stroke="#0f0" />
      <circle cx="435" cy="518" r="8" stroke="#fff" />
      <circle cx="508" cy="493" r="9" stroke="#fff" />
      <path d="M358 334v-20h60v20M438 368h16v16h-16M318 372h18v8h-18M420 559h42" stroke="#f0f" />
    </g>
    <g stroke="#fff">
      <path d="M47.500 445.500h8v8h-8zM51.500 449.500V390M51.500 449.500H110M47.500 398l4-8 4 8M103 445.500l8 4-8 4" />
      <path d="M47.500 377.500l4 5 4-5M51.500 382v6M114.500 444.500l9 10M123.500 444.500l-9 10" />
    </g>
  </svg>
);

/* ---------- parts ---------- */
type SelectProps = { label: string; value: string; w?: number; off?: boolean; lead?: React.ReactNode; note?: string };
const SelectBox = ({ label, value, w, off, lead, note }: SelectProps) => (
  <Combo $w={w} $off={off}>
    {lead}
    <select aria-label={label} disabled={off}>
      <option>{value}</option>
    </select>
    {note && <ComboNote>{note}</ComboNote>}
    <Drop>
      <Arrow off={off} />
    </Drop>
  </Combo>
);

const Lead = styled.span<{ $pad: number; $gap?: number }>`
  display: flex;
  align-items: center;
  flex: none;
  padding-left: ${(p) => p.$pad}px;
  margin-right: ${(p) => p.$gap ?? 3}px;
  gap: 6px;
`;
const PropIcon = ({ name }: { name: string }) => <Svg>{propIcons[name]}</Svg>;

const menus = [
  ["文件", "F"], ["编辑", "E"], ["视图", "V"], ["插入", "I"], ["格式", "O"], ["标注", "N"],
  ["绘制", "D"], ["修改", "M"], ["工具", "T"], ["窗口", "W"], ["帮助", "H"],
];
const fileGroups = [
  ["new", "open", "save"], ["print", "preview"], ["cut", "copy", "paste", "brush"], ["undo", "redo"], ["pan", "zoom", "zoomBack"], ["style"],
];

const cursor = <path d="M9 5v11l3-3 2 4 2-1-2-4h4z" fill="#fff" stroke="#333" strokeWidth=".8" />;
const monitor = <><path d="M1.500 2.500h11v8h-11z" fill="#cdd3da" stroke="#6c6c6c" strokeWidth="2" /><path d="M4 13h7" stroke="#777" strokeWidth="2" /></>;

const PropertyPanel = () => (
  <Properties aria-label="特性">
    <PropTitle>
      <h2>特性</h2>
      <PanelButton aria-label="浮动"><Restore /></PanelButton>
      <PanelButton aria-label="关闭"><Cross /></PanelButton>
    </PropTitle>
    <PickRow>
      <SelectBox label="选项" value="无选项" />
      <PickButton aria-label="选择"><Svg s={17}><path d="M1.500 2v12l3-2M5.500 2v11M1.500 2l5 5M5.500 2l5 5" stroke="#777" strokeWidth="1.300" />{cursor}</Svg></PickButton>
      <PickButton aria-label="选择匹配"><Svg s={17}>{monitor}{cursor}</Svg></PickButton>
      <PickButton aria-label="快速选择"><Svg s={17}>{monitor}<path d="M13 6l-4 6h3l-2 5 6-7h-3l3-4z" fill="#ffc81e" stroke="#a87c00" strokeWidth=".6" /></Svg></PickButton>
    </PickRow>
    <PropFrame>
      <PropList>
        <Group>
          <legend>常规</legend>
          <PropRow><PropIcon name="layer" /><SelectBox label="图层" value="02" /></PropRow>
          <PropRow><PropIcon name="weight" /><SelectBox label="线宽" value="ByLayer" lead={<Lead $pad={1} $gap={2}><Rule /></Lead>} /></PropRow>
          <PropRow><PropIcon name="pattern" /><SelectBox label="线型" value="ByLayer" note="Sol" /></PropRow>
          <PropRow><PropIcon name="scale" /><Field aria-label="线型比例" defaultValue="1" /></PropRow>
          <PropRow><PropIcon name="colour" /><SelectBox label="颜色" value="ByLayer" lead={<Lead $pad={3}><RedDot /></Lead>} /></PropRow>
          <PropRow><PropIcon name="link" /><Field aria-label="超链接" /></PropRow>
        </Group>
        <Group>
          <legend>打印样式</legend>
          <PropRow><PropIcon name="plot" /><SelectBox label="打印样式" value="无" /></PropRow>
          <PropRow><PropIcon name="table" /><SelectBox label="样式表" value="" off /></PropRow>
          <PropRow><PropIcon name="attach" /><Field aria-label="附着到" $off readOnly defaultValue="无" /></PropRow>
        </Group>
        <Group>
          <legend>视图</legend>
          <PropRow><PropIcon name="x" /><Field aria-label="中心 X" $off readOnly defaultValue="24347.9442" /></PropRow>
          <PropRow><PropIcon name="y" /><Field aria-label="中心 Y" $off readOnly defaultValue="21044.0658" /></PropRow>
          <PropRow><PropIcon name="z" /><Field aria-label="中心 Z" $off readOnly defaultValue="0" /></PropRow>
          <PropRow><PropIcon name="width" /><Field aria-label="宽度" $off readOnly defaultValue="122644.9956" /></PropRow>
        </Group>
      </PropList>
      <ScrollBar>
        <ScrollButton aria-label="向上"><Arrow up /></ScrollButton>
        <ScrollSpace><ScrollThumb /></ScrollSpace>
        <ScrollButton aria-label="向下"><Arrow /></ScrollButton>
      </ScrollBar>
    </PropFrame>
    <PanelTabs>
      <PanelTab>主页</PanelTab>
      <PanelTab $on>特性</PanelTab>
    </PanelTabs>
  </Properties>
);

const firefox = (
  <>
    <circle cx="9" cy="9" r="8" fill="#e8731a" />
    <circle cx="9.500" cy="7.500" r="5" fill="#2c5aa8" />
    <path d="M2 5c3 2 2 5 5 6s5 1 6-2c1 4-2 7-6 6S1 10 2 5z" fill="#f9b233" />
    <path d="M6 4l4-1 3 3-3 1z" fill="#8ec4f0" />
  </>
);
const launchers: [string, React.ReactNode][] = [
  ["desktop", <><path d="M1 1h15l1 6H0z" fill="#a4a4a0" stroke="#666" /><path d="M8 7h3v11H8z" fill="#8a5a22" /><path d="M1 14l7-3 8 1-4 2 3 3-6-2-4 2z" fill="#d01818" /></>],
  ["a", <><circle cx="9" cy="9" r="7.500" fill="#d4d8dc" stroke="#3a3a3a" strokeWidth="2.200" /><path d="M6.500 7c2-1.500 5-1 5 1v4M11.500 9c-3-.5-5 .3-5 1.800S10.500 12.500 11.500 10" stroke="#222" strokeWidth="1.600" /></>],
  ["player", <><path d="M8 0h2l5 14H3z" fill="#f47b0a" /><path d="M6.500 5h5l1 3h-7zM5 10.500h8l.8 2.500H4z" fill="#fff" /><path d="M1 14h16l1 4H0z" fill="#f58a1a" /></>],
  ["movies", <><path d="M-1 5l9 12 3-2L4 1z" fill="#2a6fc0" stroke="#222" /><circle cx="12" cy="6.500" r="6" fill="#ddd" stroke="#444" /><circle cx="10" cy="4" r="1.600" fill="#222" /><circle cx="14" cy="4" r="1.600" fill="#222" /><circle cx="9.500" cy="8" r="1.600" fill="#222" /><circle cx="14.500" cy="8" r="1.600" fill="#222" /><path d="M12 13l2 4 3-4" stroke="#eee" strokeWidth="2.500" /></>],
  ["scenery", <><path d="M0 1h18v7H0z" fill="#7fb0dc" /><path d="M0 7h18v4H0z" fill="#e9eef2" /><path d="M0 11h18v6H0z" fill="#c7a27a" /></>],
  ["firefox", firefox],
];

export default function App() {
  return (
    <Page>
      <GlobalStyle />
      <TitleBar>
        <TitleLogo><DsMark s={22} /></TitleLogo>
        <Title>DraftSight － [广东潮州三百门脱硫风机总装图050603.dwg*]</Title>
        <Brand>
          <BrandText>veket</BrandText>
          <svg width="60" height="28" viewBox="0 0 60 28" aria-hidden="true">
            <path d="M34 1l2 2 2-1-1 3 1 2-3-1-2 1 1-3-2-2h2z" fill="#f08a24" />
            <path d="M47 1l2 2 2-1-1 3 1 2-3-1-2 1 1-3-2-2h2z" fill="#e03030" />
            <path d="M27 6l4 1-2 4-3-2z" fill="#e8c820" />
            <path d="M4 22l4 1-2 4-3-2z" fill="#2a6fe0" />
            <path d="M17 21l4 1-2 4-3-2z" fill="#28b8e8" />
            <path d="M1 9l4 1-2 4-3-2z" fill="#8a4ad0" />
          </svg>
        </Brand>
        <WindowButtons>
          <WindowButton $w={28} aria-label="置顶"><Svg s={12} box="0 0 12 12"><path d="M6 1l4 4H7.500v5h-3V5H2z" fill="#fff" stroke="#778" strokeWidth=".7" /></Svg></WindowButton>
          <WindowButton $w={28} aria-label="最小化"><Svg s={12} box="0 0 12 12"><path d="M.5 7.500h11v3H.5z" fill="#fff" stroke="#556" /></Svg></WindowButton>
          <WindowButton $w={27} aria-label="还原"><Svg s={12} box="0 0 12 12"><path d="M3.500.5h8v8h-8z" fill="#fff" stroke="#556" /><path d="M.5 2.500h8v9h-8z" fill="#fff" stroke="#556" /><path d="M3 5.500h3v3H3z" fill="#9ab" stroke="#556" /></Svg></WindowButton>
          <WindowButton $w={48} $close aria-label="关闭"><Svg s={12} box="0 0 12 12"><path d="M2 2l8 8M10 2l-8 8" stroke="#534" strokeWidth="4" /><path d="M2 2l8 8M10 2l-8 8" stroke="#fff" strokeWidth="2.500" /></Svg></WindowButton>
        </WindowButtons>
      </TitleBar>

      <MenuBar>
        <DsMark s={14} />
        <MenuItems>
          {menus.map(([name, key]) => (
            <MenuItem key={key}>{name}(<u>{key}</u>)</MenuItem>
          ))}
        </MenuItems>
        <MdiButton aria-label="最小化"><Svg s={8} box="0 0 8 8"><path d="M0 7h7" stroke="#000" strokeWidth="2" /></Svg></MdiButton>
        <MdiButton aria-label="还原"><Restore /></MdiButton>
        <MdiButton $gap aria-label="关闭"><Cross /></MdiButton>
      </MenuBar>

      <ToolRow>
        <Grip />
        {fileGroups.map((group, i) => (
          <React.Fragment key={i}>
            {i > 0 && <Separator />}
            {group.map((name) => (
              <ToolButton key={name} aria-label={name}><Svg>{fileIcons[name]}</Svg></ToolButton>
            ))}
          </React.Fragment>
        ))}
      </ToolRow>
      <ToolRow>
        <ToolSection $grow>
          <Grip />
          <ToolButton aria-label="图层"><Svg><g transform="translate(0 6) scale(1 .8)">{propIcons.layer}</g><path d="M3 5c2-4 6-5 10-4l3 2-1 4-3 0-3 3-3-1 1-2z" fill="#e7bd91" stroke="#9a6c3e" strokeWidth=".8" /></Svg></ToolButton>
          <SelectBox
            label="当前图层"
            value="02"
            w={298}
            lead={
              <Lead $pad={3} $gap={5}>
                <Svg s={12} box="0 0 12 12"><circle cx="6" cy="6" r="4.500" fill="#12a312" /><circle cx="5" cy="4.500" r="1.500" fill="#7ee07e" /></Svg>
                <Svg s={14} box="0 0 14 14"><path d="M1 8c1-3 4-1 6-3s5-2 6 0-2 3-4 3-6 4-8 0z" fill="#cfe5fa" stroke="#7aa3d0" /></Svg>
                <Svg s={14} box="0 0 14 14"><path d="M1.500 6V3c0-3 5-3 5 0v4" stroke="#777" strokeWidth="1.500" /><path d="M4.500 6.500h9v7h-9z" fill="#e2cd84" stroke="#7d6a2a" /></Svg>
                <RedDot s={16} />
              </Lead>
            }
          />
        </ToolSection>
        <ToolSection>
          <Grip />
          <SelectBox label="颜色" value="ByLayer" w={150} lead={<Lead $pad={2}><RedDot /></Lead>} />
          <Separator />
          <SelectBox label="线型" value="ByLayer" w={151} note="Solid line" />
          <Separator />
          <SelectBox label="线宽" value="ByLayer" w={151} lead={<Lead $pad={1} $gap={1}><Rule /></Lead>} />
        </ToolSection>
      </ToolRow>

      <Work>
        <SideBar $left>
          <GripFlat />
          {drawIcons.map(([name, icon]) => (
            <ToolButton key={name} aria-label={name}><Svg s={17}>{icon}</Svg></ToolButton>
          ))}
        </SideBar>
        <Middle>
          <Upper>
            <PropertyPanel />
            <Viewport>
              <Canvas><Plan /></Canvas>
              <SheetTabs>
                <SheetTab $on>
                  <svg width="50" height="19" aria-hidden="true"><path d="M1 0l6 16q1 2 3 2h30q2 0 3-2l6-16z" fill="#fff" stroke="#222" /></svg>
                  <span>模型</span>
                </SheetTab>
                <SheetTab>
                  <svg width="64" height="19" aria-hidden="true"><path d="M1 1.500h62l-6 14q-1 2-3 2H10q-2 0-3-2z" stroke="#222" fill={face} /></svg>
                  <span>Sheet1</span>
                </SheetTab>
              </SheetTabs>
            </Viewport>
          </Upper>
          <Command aria-label="命令窗口">
            <PanelTitle>
              <h2>命令窗口</h2>
              <PanelButton aria-label="浮动"><Restore /></PanelButton>
              <PanelButton aria-label="关闭"><Cross /></PanelButton>
            </PanelTitle>
            <Log>
              <textarea aria-label="命令历史" readOnly defaultValue=": «取消»" />
              <LogScroll>
                <ScrollButton aria-label="向上"><Arrow up /></ScrollButton>
                <ScrollButton aria-label="向下"><Arrow /></ScrollButton>
              </LogScroll>
            </Log>
            <Prompt aria-label="命令" defaultValue=":" />
          </Command>
        </Middle>
        <SideBar>
          <GripFlat />
          {editIcons.map(([name, icon]) => (
            <ToolButton key={name} aria-label={name}><Svg s={17}>{icon}</Svg></ToolButton>
          ))}
        </SideBar>
      </Work>

      <StatusBar>
        <StatusBox $w={327} />
        <ModeBox>
          <ModeButton>捕捉</ModeButton>
          <ModeButton>网格</ModeButton>
          <ModeButton>正交</ModeButton>
        </ModeBox>
        <ModeBox>
          <ModeButton $down aria-pressed="true">极轴</ModeButton>
          <ModeButton $down aria-pressed="true">对象捕捉</ModeButton>
          <ModeButton $down aria-pressed="true">对象追踪</ModeButton>
        </ModeBox>
        <StatusBox>(64664.9455,-21729.2234,0)</StatusBox>
      </StatusBar>

      <TaskBar>
        <StartButton><span>veket</span></StartButton>
        {launchers.map(([name, icon]) => (
          <Launch key={name} aria-label={name}><Svg s={20}>{icon}</Svg></Launch>
        ))}
        <PagerOn><DsMark s={16} /></PagerOn>
        <PagerOff />
        <Task>
          <Svg s={4} box="0 0 4 4"><circle cx="2" cy="2" r="2" fill="#3a4c6c" /></Svg>
          <Svg s={17}>{firefox}</Svg>
          [免费的CAD软件DraftSig···
        </Task>
        <Task $on><DsMark />DraftSight － [广东潮州...</Task>
        <Spacer />
        <Tray>
          <Svg w={25} h={24} box="0 0 25 24"><circle cx="12" cy="12" r="10.500" fill="#f3efe2" stroke="#e2902a" strokeWidth="1.500" /><path d="M13 15V5l7-1v9" stroke="#4caf1e" strokeWidth="2" /><circle cx="11.500" cy="15" r="2.500" fill="#4caf1e" /><circle cx="18.500" cy="13" r="2.500" fill="#4caf1e" /></Svg>
          <Svg w={9} h={24} box="0 0 9 24"><path d="M0 0h9v24H0z" fill="#1030d8" /><path d="M4.500 0v24M0 4.500h9M0 9.500h9M0 14.500h9M0 19.500h9" stroke="#041060" /></Svg>
          <Svg w={36} h={24} box="0 0 36 24">
            <path d="M1 0h34v24H1z" fill="#5a5548" />
            <path d="M1 2h34M1 5h34M1 8h34M1 11h34M1 14h34M1 17h34M1 20h34M1 23h34" stroke="#f0a21e" strokeWidth="2" strokeDasharray="2 1" />
          </Svg>
          <Svg w={29} h={24} box="0 0 29 24"><path d="M1 0h27v24H1z" fill="#3a6ab0" /><path d="M3.500 3.500h21v13h-21z" fill="#1c8a4a" stroke="#d6e8d8" /><path d="M9 7h11v8H9z" fill="#dff0df" /><circle cx="15" cy="11" r="2.400" fill="#1c8a4a" /><path d="M14 17v7" stroke="#ccc" strokeWidth="2" /></Svg>
          <Svg w={26} h={24} box="0 0 26 24"><path d="M2 3h20v15H2z" fill="#b9b9b0" stroke="#555" /><path d="M6 6h13v9H6z" fill="#141c24" /><path d="M8 7h4v4H8z" fill="#5fa8d8" /><path d="M12 10h4v4h-4z" fill="#b04a8a" /><path d="M4 19h17v3H4z" fill="#9a9a92" /></Svg>
          <Svg w={28} h={24} box="0 0 28 24"><path d="M2 0h24v24H2z" fill="#d8e3f0" /><path d="M6 3h16v19H6z" fill="#b87818" /><path d="M8.500 5.500h11v14h-11z" fill="#fff" /><path d="M10 1h8v4h-8z" fill="#888" /><path d="M10 9h8M10 12h8M10 15h5" stroke="#777" /></Svg>
          <Svg w={25} h={24} box="0 0 25 24"><path d="M.5.5h24v24H.5z" fill="#a9b9d0" stroke="#52678c" /><path d="M3 9h18v12H3z" fill="#c9ced6" stroke="#8a93a2" /><path d="M5 12h14M5 15h14M5 18h14M8 10v10M12 10v10M16 10v10" stroke="#8a93a2" /><path d="M12 9V5h6V2" stroke="#8a93a2" strokeWidth="1.500" /></Svg>
          <Svg w={25} h={24} box="0 0 25 24"><path d="M0 0h25v24H0z" fill="#9fb4d2" /><path d="M6 4h13v19H6z" fill="#3a3a34" /><path d="M3 6h3M3 18h3M19 6h3M19 18h3M3 21h3M19 21h3" stroke="#d8a23a" strokeWidth="2" /><path d="M4 9h17l2 3-2 3H4l-2-3z" fill="#0be00b" stroke="#067006" /></Svg>
          <Svg w={24} h={24} box="0 0 24 24"><path d="M0 0h24v24H0z" fill="#9fb4d2" /><circle cx="9" cy="8" r="7.500" fill="#1f58b0" /><path d="M4 4c4-4 8-2 8 0l-4 4-4 1zM9 10l4-2 2 3-4 4z" fill="#38b048" /><path d="M11.500 10.500h11v8h-11z" fill="#2b5fa0" stroke="#ccc" /><path d="M9 21h14" stroke="#ddd" strokeWidth="2" /></Svg>
          <Clock>2011-04-11<span>09:31</span></Clock>
        </Tray>
      </TaskBar>
    </Page>
  );
}
